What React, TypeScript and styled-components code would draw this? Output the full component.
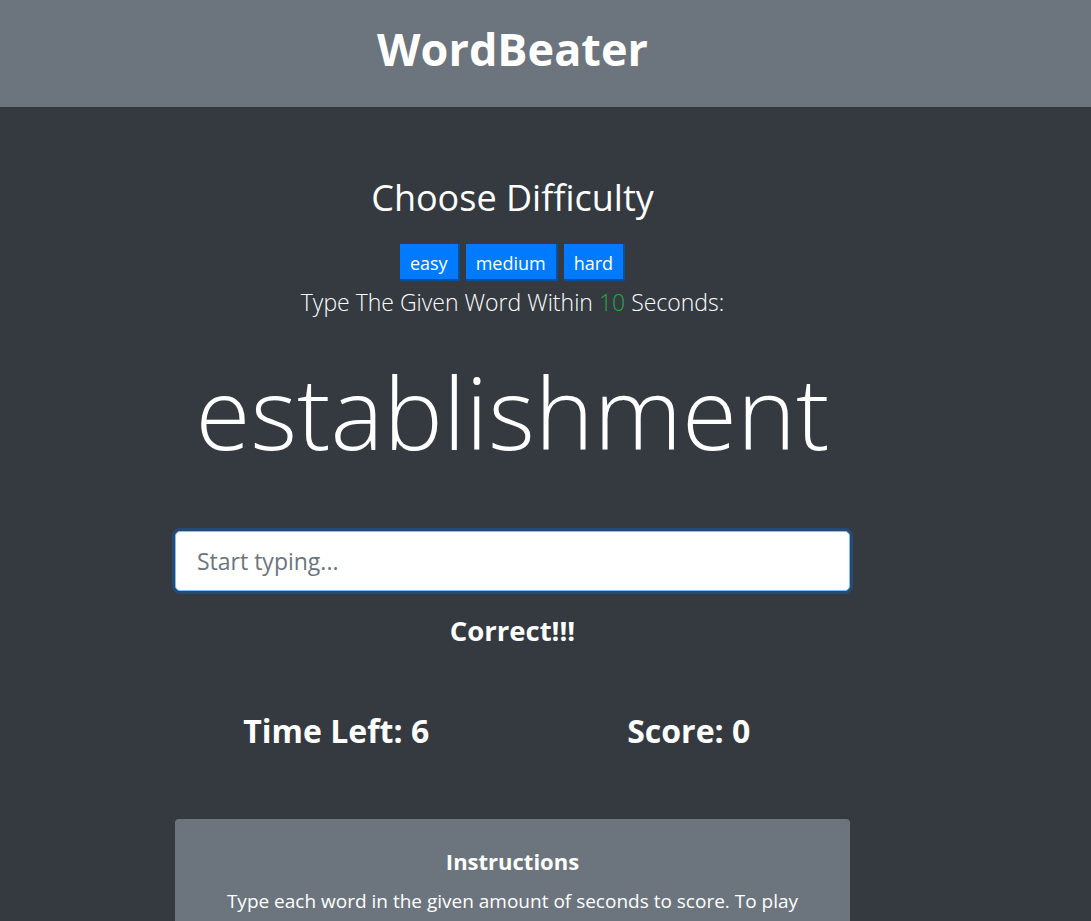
import React from "react";
import styled, { createGlobalStyle } from "styled-components";

const GlobalStyle = createGlobalStyle`
  html, body { margin: 0; padding: 0; background: #343a40; }
  body { font-family: "Open Sans", "Noto Sans", sans-serif; color: #fff; }
  * { box-sizing: border-box; }
`;

const Header = styled.header`
  background: #6c757d;
  height: 107px;
`;

const Inner = styled.div`
  width: 1025px;
  display: flex;
  flex-direction: column;
  align-items: center;
`;

const Brand = styled.h1`
  margin: 26px 0 0;
  font-size: 45px;
  line-height: 1;
  font-weight: 700;
  color: #fff;
`;

const Main = styled.main`
  background: #343a40;
  min-height: 814px;
`;

const Column = styled.div`
  width: 675px;
  margin-left: 175px;
  display: flex;
  flex-direction: column;
  align-items: center;
  text-align: center;
`;

const Heading = styled.h2`
  margin: 73px 0 0;
  font-size: 36px;
  line-height: 1;
  font-weight: 400;
`;

const ButtonRow = styled.div`
  display: flex;
  gap: 6px;
  margin-top: 28px;
`;

const LevelButton = styled.button`
  height: 37px;
  padding: 2px 10px 0;
  background: #007bff;
  color: #fff;
  border: none;
  border-right: 2px solid #0a4f99;
  border-bottom: 2px solid #0a4f99;
  font-family: inherit;
  font-size: 18px;
  line-height: 1;
`;

const Lead = styled.p`
  margin: 10px 0 0;
  font-size: 23px;
  line-height: 1;
  font-weight: 300;
`;

const Green = styled.span`
  color: #28a745;
`;

const Word = styled.h2`
  margin: 47px 0 0;
  font-size: 100px;
  line-height: 1;
  font-weight: 300;
`;

const Input = styled.input`
  margin-top: 70px;
  width: 675px;
  height: 60px;
  padding: 0 21px;
  border: 1px solid #80bdff;
  border-radius: 5px;
  box-shadow: 0 0 0 3px rgba(0, 123, 255, 0.25);
  outline: none;
  background: #fff;
  font-family: inherit;
  font-size: 23px;
  color: #495057;
  &::placeholder { color: #6c757d; }
`;

const Message = styled.h4`
  margin: 26px 0 0;
  font-size: 27.5px;
  line-height: 1;
  font-weight: 700;
`;

const StatsRow = styled.div`
  width: 705px;
  display: grid;
  grid-template-columns: 1fr 1fr;
  margin-top: 70px;
`;

const Stat = styled.h3`
  margin: 0;
  padding: 0 15px;
  font-size: 32px;
  line-height: 1;
  font-weight: 700;
`;

const Card = styled.section`
  margin-top: 72px;
  width: 675px;
  background: #6c757d;
  border-radius: 4px;
  padding: 31px 40px 30px;
`;

const CardTitle = styled.h5`
  margin: 0;
  font-size: 22px;
  line-height: 1;
  font-weight: 700;
`;

const CardText = styled.p`
  margin: 15px 0 0;
  font-size: 19px;
  line-height: 1.5;
`;

export default function App() {
  return (
    <>
      <GlobalStyle />
      <Header>
        <Inner>
          <Brand>WordBeater</Brand>
        </Inner>
      </Header>
      <Main>
        <Column>
          <Heading>Choose Difficulty</Heading>
          <ButtonRow>
            <LevelButton>easy</LevelButton>
            <LevelButton>medium</LevelButton>
            <LevelButton>hard</LevelButton>
          </ButtonRow>
          <Lead>
            Type The Given Word Within <Green>10</Green> Seconds:
          </Lead>
          <Word>establishment</Word>
          <Input placeholder="Start typing..." />
          <Message>Correct!!!</Message>
          <StatsRow>
            <Stat>Time Left: 6</Stat>
            <Stat>Score: 0</Stat>
          </StatsRow>
          <Card>
            <CardTitle>Instructions</CardTitle>
            <CardText>
              Type each word in the given amount of seconds to score. To play
              again, just type the current word. Your score will reset.
            </CardText>
          </Card>
        </Column>
      </Main>
    </>
  );
}
